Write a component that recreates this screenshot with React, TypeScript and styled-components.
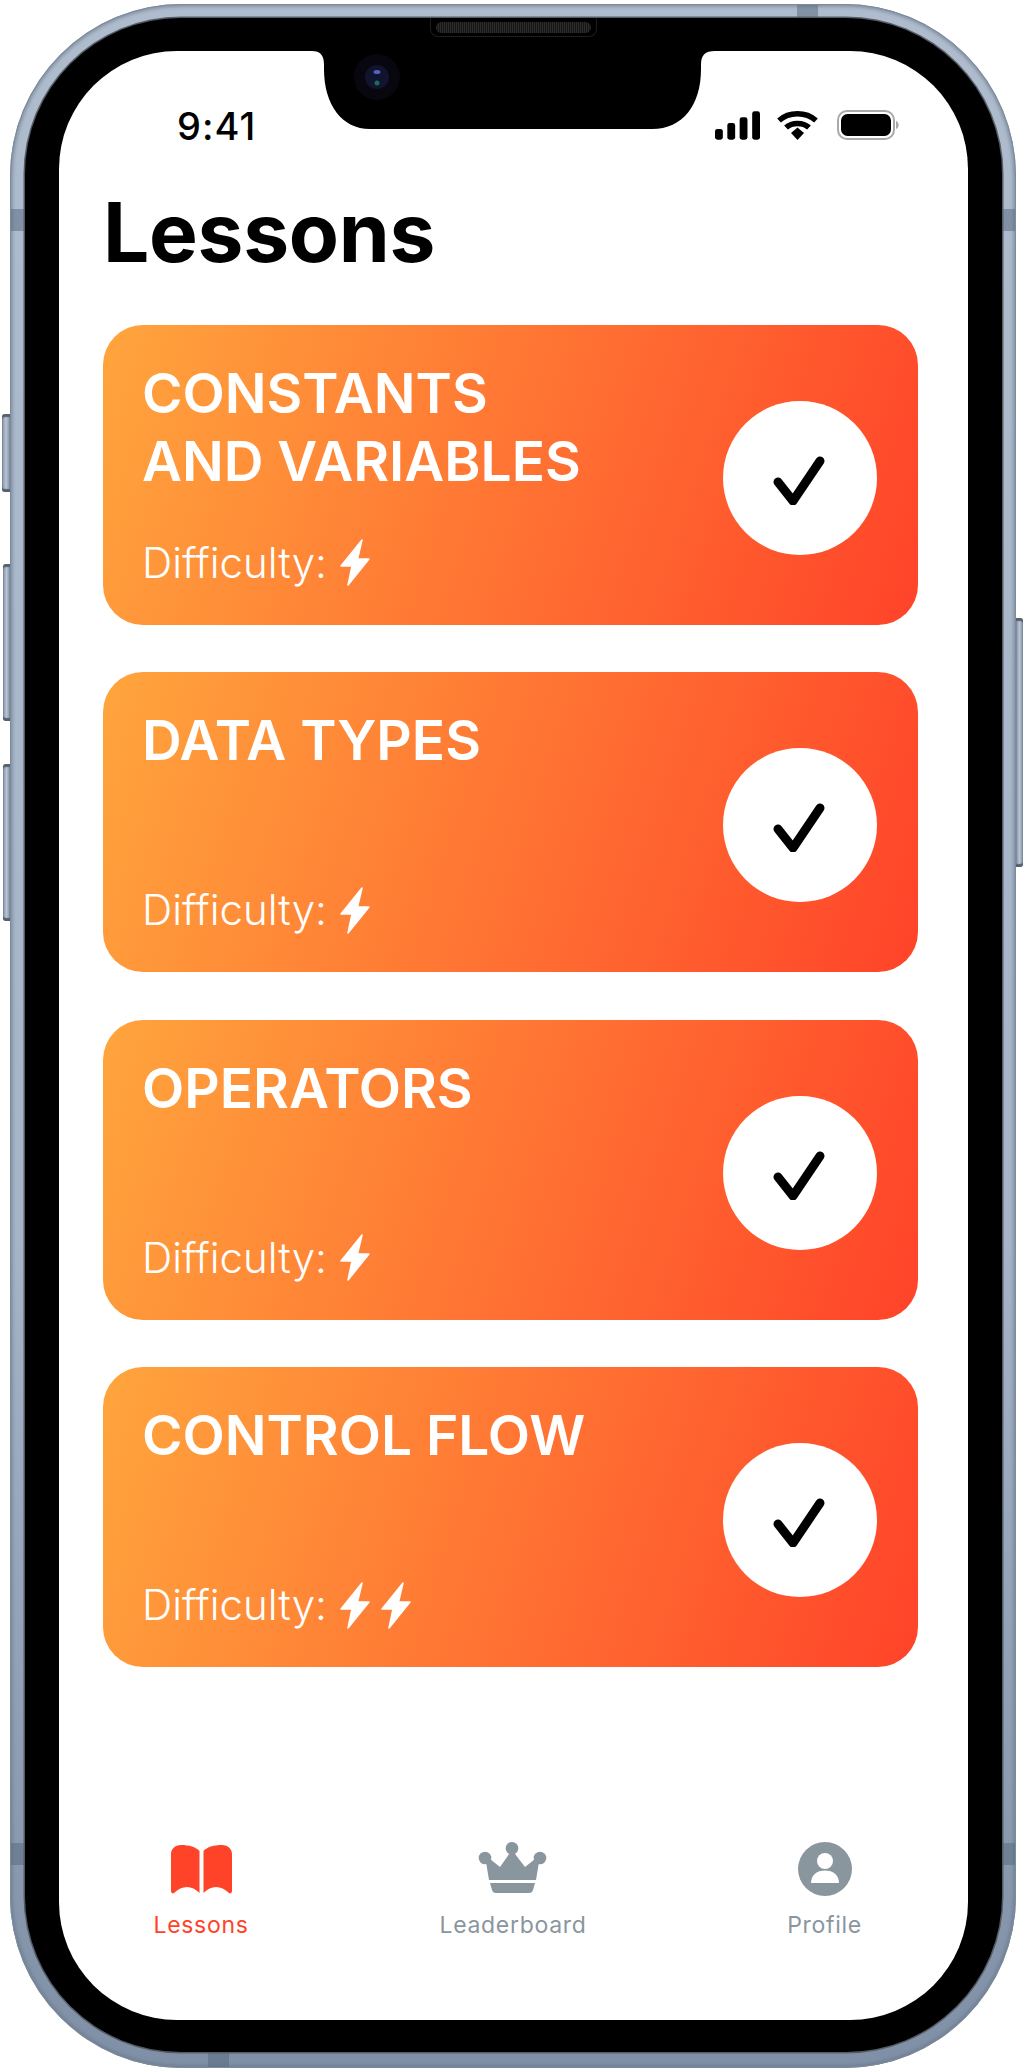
import React from 'react';
import styled, { createGlobalStyle } from 'styled-components';

const Global = createGlobalStyle`
  html, body { margin: 0; padding: 0; background: #fff; }
  body { font-family: Inter, "Liberation Sans", sans-serif; }
`;

const Page = styled.div`
  width: 1024px;
  height: 2072px;
  padding: 4px 8px 4px 10px;
  box-sizing: border-box;
  overflow: hidden;
`;

const Phone = styled.div`
  position: relative;
  width: 1006px;
  height: 2064px;
  box-sizing: border-box;
  padding: 14px 14px 16px 15px;
  border-radius: 172px;
  background: linear-gradient(180deg, #aebccd 0%, #a5b4c7 60%, #7f90a6 100%);
  box-shadow: inset 0 0 0 1px #7f8a98, inset 0 0 3px 3px rgba(100, 116, 136, 0.5);
`;

const SideButton = styled.div<{ $side: 'left' | 'right'; $top: number; $height: number; $width: number }>`
  position: absolute;
  top: ${p => p.$top}px;
  height: ${p => p.$height}px;
  width: ${p => p.$width}px;
  ${p => (p.$side === 'left' ? `left: ${-p.$width}px;` : `right: ${-p.$width}px;`)}
  border-radius: ${p => (p.$side === 'left' ? '3px 0 0 3px' : '0 3px 3px 0')};
  background: linear-gradient(90deg, #7f8fa3, #b7c4d3 50%, #7f8fa3);
  box-shadow: inset 0 3px 1px #56616f, inset 0 -3px 1px #56616f;
`;

const Band = styled.div<{ $pos: string }>`
  position: absolute;
  ${p => p.$pos}
  background: rgba(86, 104, 126, 0.5);
`;

const Bezel = styled.div`
  position: relative;
  height: 100%;
  box-sizing: border-box;
  padding: 33px 34px 32px 34px;
  border-radius: 156px;
  background: #000;
  box-shadow: 0 0 0 1.5px #565c66;
`;

const Screen = styled.div`
  height: 100%;
  display: flex;
  flex-direction: column;
  border-radius: 118px;
  background: #fff;
  overflow: hidden;
`;

const Speaker = styled.div`
  position: absolute;
  top: 0;
  left: 405px;
  width: 167px;
  height: 19px;
  box-sizing: border-box;
  padding: 4px 5px;
  border-radius: 0 0 8px 8px;
  border: 1px solid #1d1d1f;
  border-top: none;
`;

const Grille = styled.div`
  height: 11px;
  border-radius: 6px;
  background: repeating-linear-gradient(90deg, #2c2c2e 0 1px, #161617 1px 2px);
`;

const NotchShape = styled.svg`
  position: absolute;
  top: 33px;
  left: 287px;
  display: block;
`;

const StatusBar = styled.div`
  height: 94px;
  padding: 0 0 0 118px;
  display: flex;
  align-items: flex-end;
  flex-shrink: 0;
`;

const Time = styled.div`
  width: 78px;
  font-size: 38px;
  line-height: 38px;
  font-weight: 500;
  color: #000;
  white-space: nowrap;
  letter-spacing: 1px;
`;

const StatusIcons = styled.div`
  margin-left: 460px;
  display: flex;
  align-items: center;
  gap: 17px;
  padding-bottom: 5px;
`;

const BatteryIcon = styled.svg`
  display: block;
  margin-left: 2px;
`;

const Title = styled.h1`
  margin: 47px 0 0 44px;
  font-size: 82px;
  line-height: 82px;
  font-weight: 700;
  color: #000;
  letter-spacing: -0.3px;
`;

const Cards = styled.div`
  margin: 50.5px 50px 0 44px;
  display: flex;
  flex-direction: column;
  gap: 47.5px;
`;

const Card = styled.div`
  height: 300px;
  box-sizing: border-box;
  padding: 34px 41px 36px 39px;
  border-radius: 40px;
  display: flex;
  align-items: flex-start;
  justify-content: space-between;
  background: linear-gradient(108deg, #ffa53d 0%, #ff4329 100%);
  color: #fff;
`;

const CardText = styled.div`
  height: 100%;
  display: flex;
  flex-direction: column;
  justify-content: space-between;
`;

const CardTitle = styled.div`
  font-size: 55px;
  line-height: 68px;
  font-weight: 600;
  white-space: pre-line;
`;

const DifficultyRow = styled.div`
  display: flex;
  align-items: center;
  gap: 13px;
  font-size: 42px;
  line-height: 52px;
  font-weight: 300;
`;

const Bolts = styled.div`
  display: flex;
  gap: 11px;
`;

const Badge = styled.div`
  width: 154px;
  height: 154px;
  margin-top: 42px;
  border-radius: 50%;
  background: #fff;
  display: flex;
  align-items: center;
  justify-content: center;
`;

const TabBar = styled.div`
  margin-top: auto;
  padding: 0 0 81px 0;
  display: grid;
  grid-template-columns: 284px 340px 283px;
`;

const Tab = styled.div<{ $active?: boolean }>`
  display: flex;
  flex-direction: column;
  align-items: center;
  gap: 13px;
  color: ${p => (p.$active ? '#ff4329' : '#8a969e')};
  font-size: 23px;
  line-height: 28px;
  font-weight: 400;
  letter-spacing: 0.7px;
`;

const TabIcon = styled.svg`
  display: block;
  height: 56px;
`;

const Bolt = () => (
  <svg width="30" height="47" viewBox="0 0 30 47" fill="#fff" stroke="#fff" strokeWidth="1.5" strokeLinejoin="round">
    <path d="M22 1 L1 27 H12 L8 46 L29 20 H17.5 Z" />
  </svg>
);

const Check = () => (
  <svg width="54" height="54" viewBox="0 0 54 54" fill="none" stroke="#000" strokeWidth="9" strokeLinecap="round" strokeLinejoin="round">
    <path d="M5 31 L20 50 L47 10" />
  </svg>
);

const lessons = [
  { title: 'CONSTANTS\nAND VARIABLES', bolts: 1 },
  { title: 'DATA TYPES', bolts: 1 },
  { title: 'OPERATORS', bolts: 1 },
  { title: 'CONTROL FLOW', bolts: 2 },
];

export default function App() {
  return (
    <Page>
      <Global />
      <Phone>
        <SideButton $side="left" $top={410} $height={78} $width={8} />
        <SideButton $side="left" $top={560} $height={157} $width={7} />
        <SideButton $side="left" $top={760} $height={157} $width={7} />
        <SideButton $side="right" $top={614} $height={249} $width={7} />
        <Band $pos="left: 1px; top: 205px; width: 14px; height: 22px;" />
        <Band $pos="right: 1px; top: 205px; width: 14px; height: 22px;" />
        <Band $pos="left: 1px; top: 1839px; width: 14px; height: 22px;" />
        <Band $pos="right: 1px; top: 1839px; width: 14px; height: 22px;" />
        <Band $pos="left: 787px; top: 1px; width: 21px; height: 13px;" />
        <Band $pos="left: 198px; bottom: 1px; width: 21px; height: 15px;" />
        <Bezel>
          <Speaker><Grille /></Speaker>
          <NotchShape width="403" height="80" viewBox="0 0 403 80">
            <path d="M0 0 C8 0 12 4 12 14 V18 C12 54 30 78 58 78 H340 C371 78 389 54 389 18 V14 C389 4 393 0 403 0 Z" fill="#000" />
            <circle cx="65" cy="26" r="23" fill="#08060e" />
            <circle cx="65" cy="26" r="12" fill="#10142e" />
            <ellipse cx="65" cy="21" rx="3.5" ry="2" fill="#5560c0" />
            <circle cx="65" cy="32" r="2.5" fill="#1e6a5a" />
          </NotchShape>
          <Screen>
            <StatusBar>
              <Time>9:41</Time>
              <StatusIcons>
                <svg width="45" height="29" viewBox="0 0 46 29" fill="#000">
                  <rect x="0" y="18" width="8" height="11" rx="2.5" />
                  <rect x="12.6" y="12" width="8" height="17" rx="2.5" />
                  <rect x="25.2" y="6" width="8" height="23" rx="2.5" />
                  <rect x="38" y="0" width="8" height="29" rx="2.5" />
                </svg>
                <svg width="41" height="29" viewBox="0 0 41 29" fill="none" stroke="#000">
                  <path d="M2 9.500 C12 0.500 29 0.500 39 9.500" strokeWidth="5.500" />
                  <path d="M9 16.500 C15 11 26 11 32 16.500" strokeWidth="5.500" />
                  <path d="M14 22 L20.500 16.500 L27 22 L20.500 29 Z" fill="#000" stroke="none" />
                </svg>
                <BatteryIcon width="63" height="30" viewBox="0 0 63 30">
                  <rect x="1" y="1" width="56" height="28" rx="9" fill="none" stroke="#a9a9a9" strokeWidth="2" />
                  <rect x="4" y="4" width="50" height="22" rx="6.500" fill="#000" />
                  <path d="M59 11 C62.500 12 62.500 18 59 19 Z" fill="#a9a9a9" />
                </BatteryIcon>
              </StatusIcons>
            </StatusBar>
            <Title>Lessons</Title>
            <Cards>
              {lessons.map(l => (
                <Card key={l.title}>
                  <CardText>
                    <CardTitle>{l.title}</CardTitle>
                    <DifficultyRow>
                      Difficulty:
                      <Bolts>
                        {Array.from({ length: l.bolts }).map((_, i) => <Bolt key={i} />)}
                      </Bolts>
                    </DifficultyRow>
                  </CardText>
                  <Badge><Check /></Badge>
                </Card>
              ))}
            </Cards>
            <TabBar>
              <Tab $active>
                <TabIcon width="61" viewBox="0 0 61 56" fill="#ff4329">
                  <path d="M28.500 9 C25 5 18 3 10 3 C4 3 0 7 0 12 V49 C0 51 2 52 3 51 C11 43 21 43 28.500 51 Z" />
                  <path d="M32.500 9 C36 5 43 3 51 3 C57 3 61 7 61 12 V49 C61 51 59 52 58 51 C50 43 40 43 32.500 51 Z" />
                </TabIcon>
                Lessons
              </Tab>
              <Tab>
                <TabIcon width="70" viewBox="0 0 70 56" fill="#8a969e">
                  <circle cx="34" cy="6.300" r="6.300" />
                  <circle cx="7" cy="16" r="6.300" />
                  <circle cx="62" cy="16" r="6.300" />
                  <path d="M34 8 L47 25 L57 17 L61 20 L58 38 H11 L8 20 L12 17 L22 25 Z" />
                  <path d="M12 41 H57 L55 48 C54.500 50 53 51 51 51 H18 C16 51 14.500 50 14 48 Z" />
                </TabIcon>
                Leaderboard
              </Tab>
              <Tab>
                <TabIcon width="56" viewBox="0 0 56 56">
                  <circle cx="28" cy="27" r="27" fill="#8a969e" />
                  <circle cx="28" cy="19" r="8" fill="#fff" />
                  <path d="M14 41 C14 33 20 28.500 28 28.500 C36 28.500 42 33 42 41 Z" fill="#fff" />
                </TabIcon>
                Profile
              </Tab>
            </TabBar>
          </Screen>
        </Bezel>
      </Phone>
    </Page>
  );
}
